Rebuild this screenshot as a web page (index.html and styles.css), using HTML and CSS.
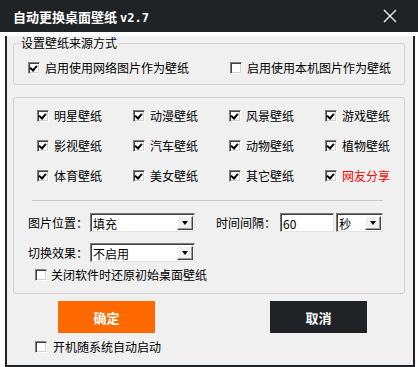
FILE: index.html
```html
<!DOCTYPE html>
<html lang="zh-CN">
<head>
    <meta charset="UTF-8">
    <title>自动更换桌面壁纸</title>
    <link rel="stylesheet" href="styles.css">
</head>
<body>

    <div class="titlebar">
        <div class="title">自动更换桌面壁纸 <span class="version">v2.7</span></div>
        <svg class="close" width="14" height="14" viewBox="0 0 14 14">
            <path d="M1 1 L13 13 M13 1 L1 13" stroke="#fff" stroke-width="1.2" fill="none"/>
        </svg>
    </div>

    <div class="frame">
        <fieldset class="source">
            <legend>设置壁纸来源方式</legend>
            <div class="source-row">
                <label class="check"><span class="box on"></span>启用使用网络图片作为壁纸</label>
                <label class="check"><span class="box"></span>启用使用本机图片作为壁纸</label>
            </div>
        </fieldset>

        <div class="options">
            <div class="category-grid">
                <label class="check"><span class="box on"></span>明星壁纸</label>
                <label class="check"><span class="box on"></span>动漫壁纸</label>
                <label class="check"><span class="box on"></span>风景壁纸</label>
                <label class="check"><span class="box on"></span>游戏壁纸</label>
                <label class="check"><span class="box on"></span>影视壁纸</label>
                <label class="check"><span class="box on"></span>汽车壁纸</label>
                <label class="check"><span class="box on"></span>动物壁纸</label>
                <label class="check"><span class="box on"></span>植物壁纸</label>
                <label class="check"><span class="box on"></span>体育壁纸</label>
                <label class="check"><span class="box on"></span>美女壁纸</label>
                <label class="check"><span class="box on"></span>其它壁纸</label>
                <label class="check red"><span class="box on"></span>网友分享</label>
            </div>

            <div class="separator"></div>

            <div class="field-row">
                <span class="field-label">图片位置：</span>
                <div class="select wide"><span>填充</span><span class="arrow"></span></div>
                <span class="field-label interval">时间间隔：</span>
                <div class="input">60</div>
                <div class="select unit"><span>秒</span><span class="arrow"></span></div>
            </div>
            <div class="field-row second">
                <span class="field-label">切换效果：</span>
                <div class="select wide"><span>不启用</span><span class="arrow"></span></div>
            </div>

            <label class="check restore"><span class="box"></span>关闭软件时还原初始桌面壁纸</label>
        </div>

        <div class="buttons">
            <button class="button ok">确定</button>
            <button class="button cancel">取消</button>
        </div>

        <label class="check autostart"><span class="box"></span>开机随系统自动启动</label>
    </div>

</body>
</html>
```

FILE: styles.css
```css
body {
    margin: 0;
    background-color: #fff;
    font-family: "Noto Sans CJK SC", "Noto Sans", sans-serif;
    font-size: 12px;
    color: #000;
}
.titlebar {
    height: 32px;
    background-color: #1f2326;
    color: #fff;
    display: flex;
    align-items: center;
    justify-content: space-between;
    padding: 0 21px 0 13px;
}
.title {
    font-size: 13px;
    font-weight: bold;
}
.version {
    font-family: "DejaVu Sans Mono", monospace;
    font-size: 12px;
}
.frame {
    margin: 0 3px 0 5px;
    height: 331px;
    box-sizing: border-box;
    border: 2px solid #1f2326;
    border-top: 0;
    background-color: #f0f0f0;
    padding: 0 8px 0 6px;
}
.source {
    margin: 4px 0 0;
    padding: 10px 0 8px;
    border: 1px solid #d4d4d4;
    border-radius: 3px;
}
.source legend {
    margin-left: 6px;
    padding: 0 1px;
    line-height: 14px;
}
.source-row {
    display: grid;
    grid-template-columns: 202px auto;
    padding-left: 14px;
}
.check {
    display: flex;
    align-items: center;
    gap: 5px;
    height: 16px;
    line-height: 16px;
    white-space: nowrap;
}
.check.red {
    color: #ff0000;
}
.box {
    width: 12px;
    height: 12px;
    box-sizing: border-box;
    flex: none;
    background-color: #fff;
    border: 1px solid;
    border-color: #808080 #fff #fff #808080;
    box-shadow: inset 1px 1px 0 #404040, inset -1px -1px 0 #d4d0c8;
    position: relative;
}
.box.on::after {
    content: "";
    position: absolute;
    left: 2px;
    top: 1px;
    width: 3px;
    height: 5px;
    border: solid #000;
    border-width: 0 2px 2px 0;
    transform: rotate(40deg);
}
.options {
    margin-top: 12px;
    padding: 10px 0 10px;
    border: 1px solid #d4d4d4;
    border-radius: 3px;
}
.category-grid {
    display: grid;
    grid-template-columns: repeat(4, 96px);
    row-gap: 14px;
    padding-left: 23px;
}
.separator {
    height: 1px;
    background-color: #c8c8c8;
    margin: 16px 21px 0 18px;
}
.field-row {
    display: flex;
    align-items: center;
    height: 19px;
    margin-top: 12px;
    padding-left: 14px;
}
.field-row.second {
    margin-top: 11px;
}
.field-label {
    width: 60px;
    margin-right: 2px;
    text-align: right;
}
.field-label.interval {
    margin-left: 21px;
    margin-right: 4px;
}
.select, .input {
    height: 19px;
    box-sizing: border-box;
    background-color: #fff;
    border: 1px solid;
    border-color: #7a7a7a #e3e3e3 #e3e3e3 #7a7a7a;
    box-shadow: inset 1px 1px 0 #404040;
    display: flex;
    align-items: center;
    justify-content: space-between;
    padding: 2px 1px 1px 2px;
}
.select.wide {
    width: 105px;
}
.select.unit {
    width: 47px;
    margin-left: 2px;
}
.input {
    width: 54px;
}
.arrow {
    width: 16px;
    align-self: stretch;
    box-sizing: border-box;
    background-color: #f0f0f0;
    border: 1px solid;
    border-color: #fff #404040 #404040 #fff;
    box-shadow: inset -1px -1px 0 #a0a0a0;
    display: flex;
    align-items: center;
    justify-content: center;
}
.arrow::after {
    content: "";
    border-left: 3.5px solid transparent;
    border-right: 3.5px solid transparent;
    border-top: 4px solid #000;
}
.check.restore {
    margin: 5px 0 0 21px;
    gap: 4px;
}
.buttons {
    display: flex;
    gap: 115px;
    padding-left: 45px;
    margin-top: 7px;
}
.button {
    width: 97px;
    height: 32px;
    border: none;
    color: #fff;
    font-family: inherit;
    font-size: 13px;
    font-weight: bold;
}
.button.ok {
    background-color: #ff6a00;
}
.button.cancel {
    background-color: #1f2326;
}
.check.autostart {
    margin: 6px 0 0 22px;
    gap: 6px;
}
```
